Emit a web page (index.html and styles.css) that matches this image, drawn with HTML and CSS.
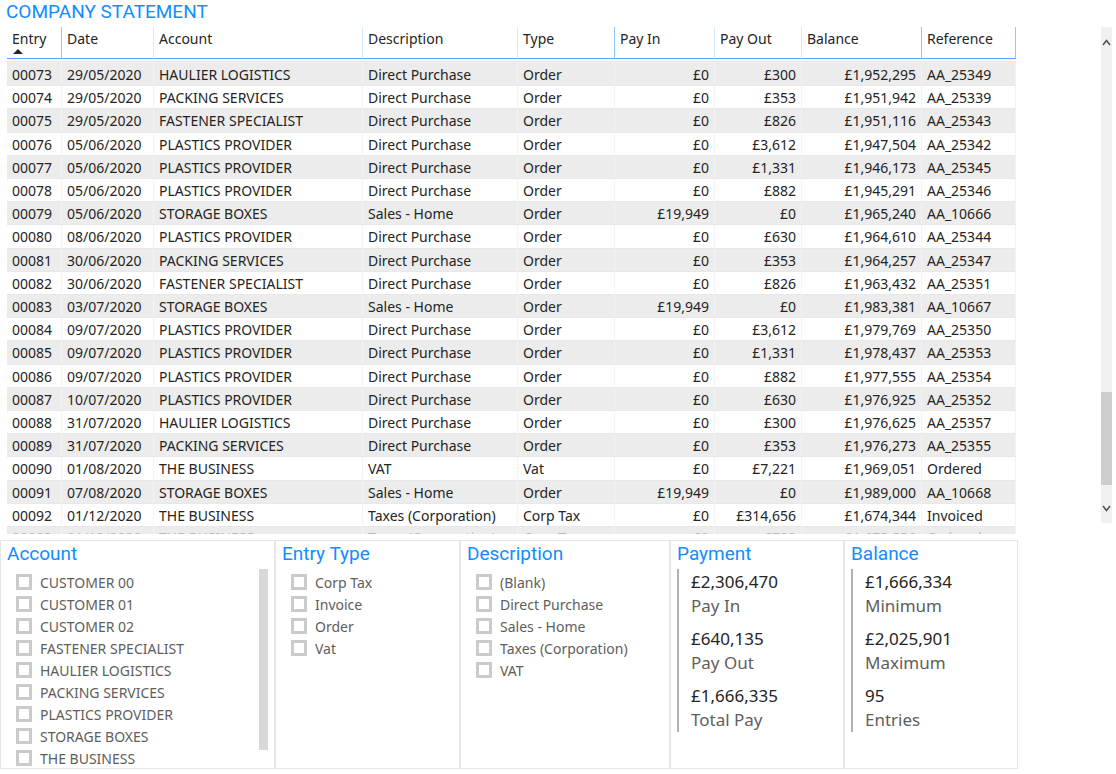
FILE: index.html
```html
<!DOCTYPE html>
<html lang="en-GB">
<head>
<meta charset="utf-8">
<title>Company Statement</title>
<link rel="stylesheet" href="styles.css">
</head>
<body>
<main class="report">
<h1 class="title">COMPANY STATEMENT</h1>
<section class="statement">
<div class="viewport">
<table class="ledger">
<colgroup><col class="c-entry"><col class="c-date"><col class="c-account"><col class="c-desc"><col class="c-type"><col class="c-in"><col class="c-out"><col class="c-balance"><col class="c-ref"></colgroup>
<thead><tr><th class="strong">Entry<span class="sort"></span></th><th>Date</th><th>Account</th><th>Description</th><th class="strong">Type</th><th>Pay In</th><th>Pay Out</th><th class="strong">Balance</th><th class="strong">Reference</th></tr></thead>
<tbody>
<tr><td>00073</td><td>29/05/2020</td><td>HAULIER LOGISTICS</td><td>Direct Purchase</td><td>Order</td><td class="n">£0</td><td class="n">£300</td><td class="n">£1,952,295</td><td>AA_25349</td></tr>
<tr><td>00074</td><td>29/05/2020</td><td>PACKING SERVICES</td><td>Direct Purchase</td><td>Order</td><td class="n">£0</td><td class="n">£353</td><td class="n">£1,951,942</td><td>AA_25339</td></tr>
<tr><td>00075</td><td>29/05/2020</td><td>FASTENER SPECIALIST</td><td>Direct Purchase</td><td>Order</td><td class="n">£0</td><td class="n">£826</td><td class="n">£1,951,116</td><td>AA_25343</td></tr>
<tr><td>00076</td><td>05/06/2020</td><td>PLASTICS PROVIDER</td><td>Direct Purchase</td><td>Order</td><td class="n">£0</td><td class="n">£3,612</td><td class="n">£1,947,504</td><td>AA_25342</td></tr>
<tr><td>00077</td><td>05/06/2020</td><td>PLASTICS PROVIDER</td><td>Direct Purchase</td><td>Order</td><td class="n">£0</td><td class="n">£1,331</td><td class="n">£1,946,173</td><td>AA_25345</td></tr>
<tr><td>00078</td><td>05/06/2020</td><td>PLASTICS PROVIDER</td><td>Direct Purchase</td><td>Order</td><td class="n">£0</td><td class="n">£882</td><td class="n">£1,945,291</td><td>AA_25346</td></tr>
<tr><td>00079</td><td>05/06/2020</td><td>STORAGE BOXES</td><td>Sales - Home</td><td>Order</td><td class="n">£19,949</td><td class="n">£0</td><td class="n">£1,965,240</td><td>AA_10666</td></tr>
<tr><td>00080</td><td>08/06/2020</td><td>PLASTICS PROVIDER</td><td>Direct Purchase</td><td>Order</td><td class="n">£0</td><td class="n">£630</td><td class="n">£1,964,610</td><td>AA_25344</td></tr>
<tr><td>00081</td><td>30/06/2020</td><td>PACKING SERVICES</td><td>Direct Purchase</td><td>Order</td><td class="n">£0</td><td class="n">£353</td><td class="n">£1,964,257</td><td>AA_25347</td></tr>
<tr><td>00082</td><td>30/06/2020</td><td>FASTENER SPECIALIST</td><td>Direct Purchase</td><td>Order</td><td class="n">£0</td><td class="n">£826</td><td class="n">£1,963,432</td><td>AA_25351</td></tr>
<tr><td>00083</td><td>03/07/2020</td><td>STORAGE BOXES</td><td>Sales - Home</td><td>Order</td><td class="n">£19,949</td><td class="n">£0</td><td class="n">£1,983,381</td><td>AA_10667</td></tr>
<tr><td>00084</td><td>09/07/2020</td><td>PLASTICS PROVIDER</td><td>Direct Purchase</td><td>Order</td><td class="n">£0</td><td class="n">£3,612</td><td class="n">£1,979,769</td><td>AA_25350</td></tr>
<tr><td>00085</td><td>09/07/2020</td><td>PLASTICS PROVIDER</td><td>Direct Purchase</td><td>Order</td><td class="n">£0</td><td class="n">£1,331</td><td class="n">£1,978,437</td><td>AA_25353</td></tr>
<tr><td>00086</td><td>09/07/2020</td><td>PLASTICS PROVIDER</td><td>Direct Purchase</td><td>Order</td><td class="n">£0</td><td class="n">£882</td><td class="n">£1,977,555</td><td>AA_25354</td></tr>
<tr><td>00087</td><td>10/07/2020</td><td>PLASTICS PROVIDER</td><td>Direct Purchase</td><td>Order</td><td class="n">£0</td><td class="n">£630</td><td class="n">£1,976,925</td><td>AA_25352</td></tr>
<tr><td>00088</td><td>31/07/2020</td><td>HAULIER LOGISTICS</td><td>Direct Purchase</td><td>Order</td><td class="n">£0</td><td class="n">£300</td><td class="n">£1,976,625</td><td>AA_25357</td></tr>
<tr><td>00089</td><td>31/07/2020</td><td>PACKING SERVICES</td><td>Direct Purchase</td><td>Order</td><td class="n">£0</td><td class="n">£353</td><td class="n">£1,976,273</td><td>AA_25355</td></tr>
<tr><td>00090</td><td>01/08/2020</td><td>THE BUSINESS</td><td>VAT</td><td>Vat</td><td class="n">£0</td><td class="n">£7,221</td><td class="n">£1,969,051</td><td>Ordered</td></tr>
<tr><td>00091</td><td>07/08/2020</td><td>STORAGE BOXES</td><td>Sales - Home</td><td>Order</td><td class="n">£19,949</td><td class="n">£0</td><td class="n">£1,989,000</td><td>AA_10668</td></tr>
<tr><td>00092</td><td>01/12/2020</td><td>THE BUSINESS</td><td>Taxes (Corporation)</td><td>Corp Tax</td><td class="n">£0</td><td class="n">£314,656</td><td class="n">£1,674,344</td><td>Invoiced</td></tr>
<tr class="partial"><td>00093</td><td>01/12/2020</td><td>THE BUSINESS</td><td>Taxes (Corporation)</td><td>Corp Tax</td><td class="n">£0</td><td class="n">£788</td><td class="n">£1,673,556</td><td>Ordered</td></tr>
</tbody>
</table>
</div>
<div class="scrollbar">
<button class="arrow" aria-label="Scroll up"><svg viewBox="0 0 9 7"><path d="M1 6 4.500 1.500 8 6"/></svg></button>
<div class="track"><div class="thumb"></div></div>
<button class="arrow" aria-label="Scroll down"><svg viewBox="0 0 9 7"><path d="M1 1 4.500 5.500 8 1"/></svg></button>
</div>
</section>
<section class="panels">
<fieldset class="panel"><legend>Account</legend>
<div class="options">
<label><input type="checkbox">CUSTOMER 00</label>
<label><input type="checkbox">CUSTOMER 01</label>
<label><input type="checkbox">CUSTOMER 02</label>
<label><input type="checkbox">FASTENER SPECIALIST</label>
<label><input type="checkbox">HAULIER LOGISTICS</label>
<label><input type="checkbox">PACKING SERVICES</label>
<label><input type="checkbox">PLASTICS PROVIDER</label>
<label><input type="checkbox">STORAGE BOXES</label>
<label><input type="checkbox">THE BUSINESS</label>
</div>
<div class="bar"></div>
</fieldset>
<fieldset class="panel"><legend>Entry Type</legend>
<div class="options">
<label><input type="checkbox">Corp Tax</label>
<label><input type="checkbox">Invoice</label>
<label><input type="checkbox">Order</label>
<label><input type="checkbox">Vat</label>
</div>
</fieldset>
<fieldset class="panel"><legend>Description</legend>
<div class="options">
<label><input type="checkbox">(Blank)</label>
<label><input type="checkbox">Direct Purchase</label>
<label><input type="checkbox">Sales - Home</label>
<label><input type="checkbox">Taxes (Corporation)</label>
<label><input type="checkbox">VAT</label>
</div>
</fieldset>
<section class="panel"><h2>Payment</h2>
<dl class="card">
<div><dd>£2,306,470</dd><dt>Pay In</dt></div>
<div><dd>£640,135</dd><dt>Pay Out</dt></div>
<div><dd>£1,666,335</dd><dt>Total Pay</dt></div>
</dl>
</section>
<section class="panel"><h2>Balance</h2>
<dl class="card">
<div><dd>£1,666,334</dd><dt>Minimum</dt></div>
<div><dd>£2,025,901</dd><dt>Maximum</dt></div>
<div><dd>95</dd><dt>Entries</dt></div>
</dl>
</section>
</section>
</main>
</body>
</html>
```
FILE: styles.css
```css
* { box-sizing: border-box; }

body {
  margin: 0;
  background: #fff;
  color: #252423;
  font: 400 14px/20px "Noto Sans", "Segoe UI", sans-serif;
}

.report {
  display: flex;
  flex-direction: column;
  height: 100vh;
  padding-bottom: 5px;
}

.title, .panel h2, .panel legend {
  margin: 0;
  padding: 0;
  color: #118dff;
  font-family: "Roboto", sans-serif;
  font-size: 19px;
  font-weight: 400;
  line-height: 26px;
}

.title { height: 27px; padding: 0 6px; line-height: 24px; }

.statement {
  display: flex;
  flex: 1;
  min-height: 0;
  gap: 85px;
  padding: 0 4px 0 7px;
}

.viewport { flex: 1; overflow: hidden; }

.ledger {
  width: 100%;
  table-layout: fixed;
  border-collapse: separate;
  border-spacing: 0;
}

.c-entry { width: 55px; }
.c-date { width: 92px; }
.c-account { width: 209px; }
.c-desc { width: 155px; }
.c-type { width: 97px; }
.c-in { width: 100px; }
.c-out { width: 87px; }
.c-balance { width: 120px; }
.c-ref { width: 94px; }

.ledger th {
  height: 32px;
  padding: 2px 5px 0;
  border-right: 1px solid #d5eaff;
  border-bottom: 1px solid #49a5ff;
  font-weight: 400;
  line-height: 20px;
  text-align: left;
  vertical-align: top;
  white-space: nowrap;
}

.ledger th.strong { border-right-color: #8fc8ff; }

.sort {
  display: block;
  width: 0;
  margin-left: 1px;
  border: 5px solid transparent;
  border-top: 0;
  border-bottom-color: #252423;
}

.ledger td {
  height: 23px;
  padding: 2px 5px 0;
  border-right: 1px solid #f3f3f3;
  border-bottom: 1px solid #e8e8e8;
  line-height: 20px;
  vertical-align: top;
  white-space: nowrap;
}

.ledger tr:nth-child(5n + 3) td { height: 24px; }
.ledger tbody tr:first-child td { height: 27px; padding-top: 4px; border-top: 2px solid #fff; }
.ledger tbody tr:nth-child(odd) td { background-color: #ececec; }
.ledger .partial td { padding-top: 1px; color: #b8b8b8; }
.ledger .n { text-align: right; }

.scrollbar {
  display: flex;
  flex-direction: column;
  width: 11px;
  margin-bottom: 11px;
  background: #f1f1f1;
}

.arrow {
  display: flex;
  align-items: center;
  justify-content: center;
  width: 11px;
  height: 30px;
  padding: 0;
  border: 0;
  background: #f0f0f0;
}

.arrow svg { width: 9px; height: 7px; fill: none; stroke: #505050; stroke-width: 1.500; }

.track { display: flex; flex: 1; flex-direction: column; justify-content: flex-end; padding-bottom: 8px; }
.thumb { height: 93px; background: #cdcdcd; }

.panels {
  display: grid;
  grid-template-columns: 275fr 185fr 210fr 174fr 174fr;
  grid-template-rows: 100%;
  height: 229px;
  margin: 6px 98px 0 0;
}

.panel {
  position: relative;
  min-width: 0;
  min-height: 0;
  margin: 0;
  padding: 0 6px;
  border: 1px solid #e6e6e6;
}

.panel legend { float: left; width: 100%; }

.options { clear: both; padding: 5px 0 0 9px; }

.options label {
  display: flex;
  align-items: center;
  gap: 8px;
  height: 22px;
  color: #605e5c;
}

.options input {
  appearance: none;
  width: 16px;
  height: 16px;
  margin: 0 0 2px;
  border: 3px solid #cbcbcb;
  background: #fff;
}

.bar {
  position: absolute;
  top: 28px;
  right: 6px;
  bottom: 18px;
  width: 9px;
  background: #d9d8d7;
}

.card {
  display: flex;
  flex-direction: column;
  gap: 9px;
  margin: 2px 0 0;
  padding: 1px 0 0 12px;
  border-left: 2px solid #b3b0ad;
  font-size: 17px;
  line-height: 24px;
}

.card dd { margin: 0; }
.card dt { color: #605e5c; }
```
